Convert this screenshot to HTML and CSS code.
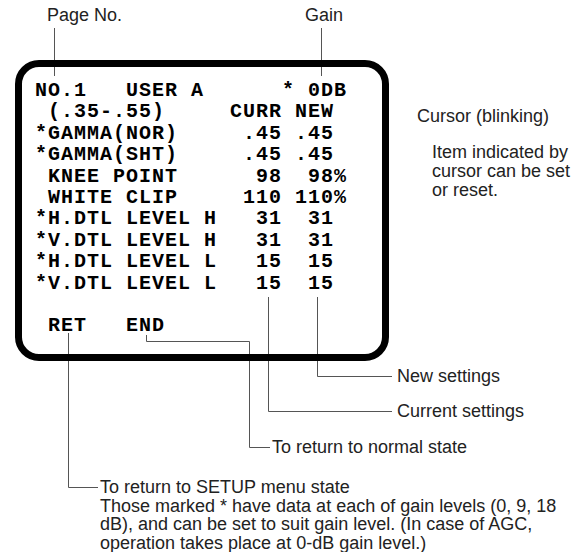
FILE: index.html
```html
<!DOCTYPE html>
<html lang="en">
<head>
    <meta charset="UTF-8">
    <meta name="viewport" content="width=device-width, initial-scale=1.0">
    <title>User Menu Page</title>
    <link rel="stylesheet" href="styles.css">
</head>
<body>

<div class="sheet">
    <!-- leader lines sit under the screen frame -->
    <svg class="leaders" width="583" height="552" viewBox="0 0 583 552">
        <path d="M54.5 28 V76" />
        <path d="M321.5 28 V76" />
        <path d="M317.5 297 V376.5 H392" />
        <path d="M268.5 297 V411.5 H392" />
        <path d="M146.5 335 V341.5 H249.5 V447.5 H270" />
        <path d="M68.5 333 V487.5 H98" />
    </svg>

    <div class="top-labels">
        <span class="label-page">Page No.</span>
        <span>Gain</span>
    </div>

    <div class="middle">
        <div class="screen">
<pre class="osd">NO.1   USER A      * 0DB
 (.35-.55)     CURR NEW
*GAMMA(NOR)     .45 .45
*GAMMA(SHT)     .45 .45
 KNEE POINT      98  98%
 WHITE CLIP     110 110%
*H.DTL LEVEL H   31  31
*V.DTL LEVEL H   31  31
*H.DTL LEVEL L   15  15
*V.DTL LEVEL L   15  15

 RET   END</pre>
        </div>
        <div class="cursor-note">
            <div class="cursor-title">Cursor (blinking)</div>
            <p>Item indicated by<br>cursor can be set<br>or reset.</p>
        </div>
    </div>

    <div class="callout callout-new">New settings</div>
    <div class="callout callout-curr">Current settings</div>
    <div class="callout callout-end">To return to normal state</div>
    <div class="callout callout-ret">
        To return to SETUP menu state<br>
        Those marked * have data at each of gain levels (0, 9, 18<br>
        dB), and can be set to suit gain level. (In case of AGC,<br>
        operation takes place at 0-dB gain level.)
    </div>
</div>

</body>
</html>
```
FILE: styles.css
```css
body {
    margin: 0;
    font-family: "Liberation Sans", Arial, sans-serif;
    font-size: 18px;
    color: #222;
    background: #fff;
}
.sheet {
    position: relative;
    width: 583px;
    height: 552px;
    overflow: hidden;
}
.leaders {
    position: absolute;
    top: 0;
    left: 0;
    z-index: 0;
}
.leaders path {
    fill: none;
    stroke: #555;
    stroke-width: 1;
}
.top-labels {
    display: flex;
    height: 60px;
    box-sizing: border-box;
    padding: 5px 0 0 47px;
    line-height: 20px;
    white-space: nowrap;
}
.label-page {
    width: 258px;
}
.middle {
    display: flex;
    align-items: flex-start;
}
.screen {
    position: relative;
    z-index: 1;
    margin-left: 15px;
    width: 374px;
    height: 301px;
    box-sizing: border-box;
    border: 7px solid #000;
    border-radius: 24px;
    padding: 13px 0 0 13px;
}
.osd {
    margin: 0;
    font-family: "Liberation Mono", "Courier New", monospace;
    font-weight: bold;
    font-size: 20px;
    line-height: 21.4px;
    letter-spacing: 1px;
    color: #000;
}
.cursor-note {
    margin-left: 28px;
    padding-top: 47px;
    line-height: 19px;
    white-space: nowrap;
}
.cursor-note p {
    margin: 17px 0 0 15px;
}
.callout {
    line-height: 20px;
    white-space: nowrap;
}
.callout-new {
    margin: 5px 0 0 397px;
}
.callout-curr {
    margin: 15px 0 0 397px;
}
.callout-end {
    margin: 16px 0 0 272px;
}
.callout-ret {
    margin: 21px 0 0 100px;
    font-size: 18px;
    line-height: 18.5px;
}
```
